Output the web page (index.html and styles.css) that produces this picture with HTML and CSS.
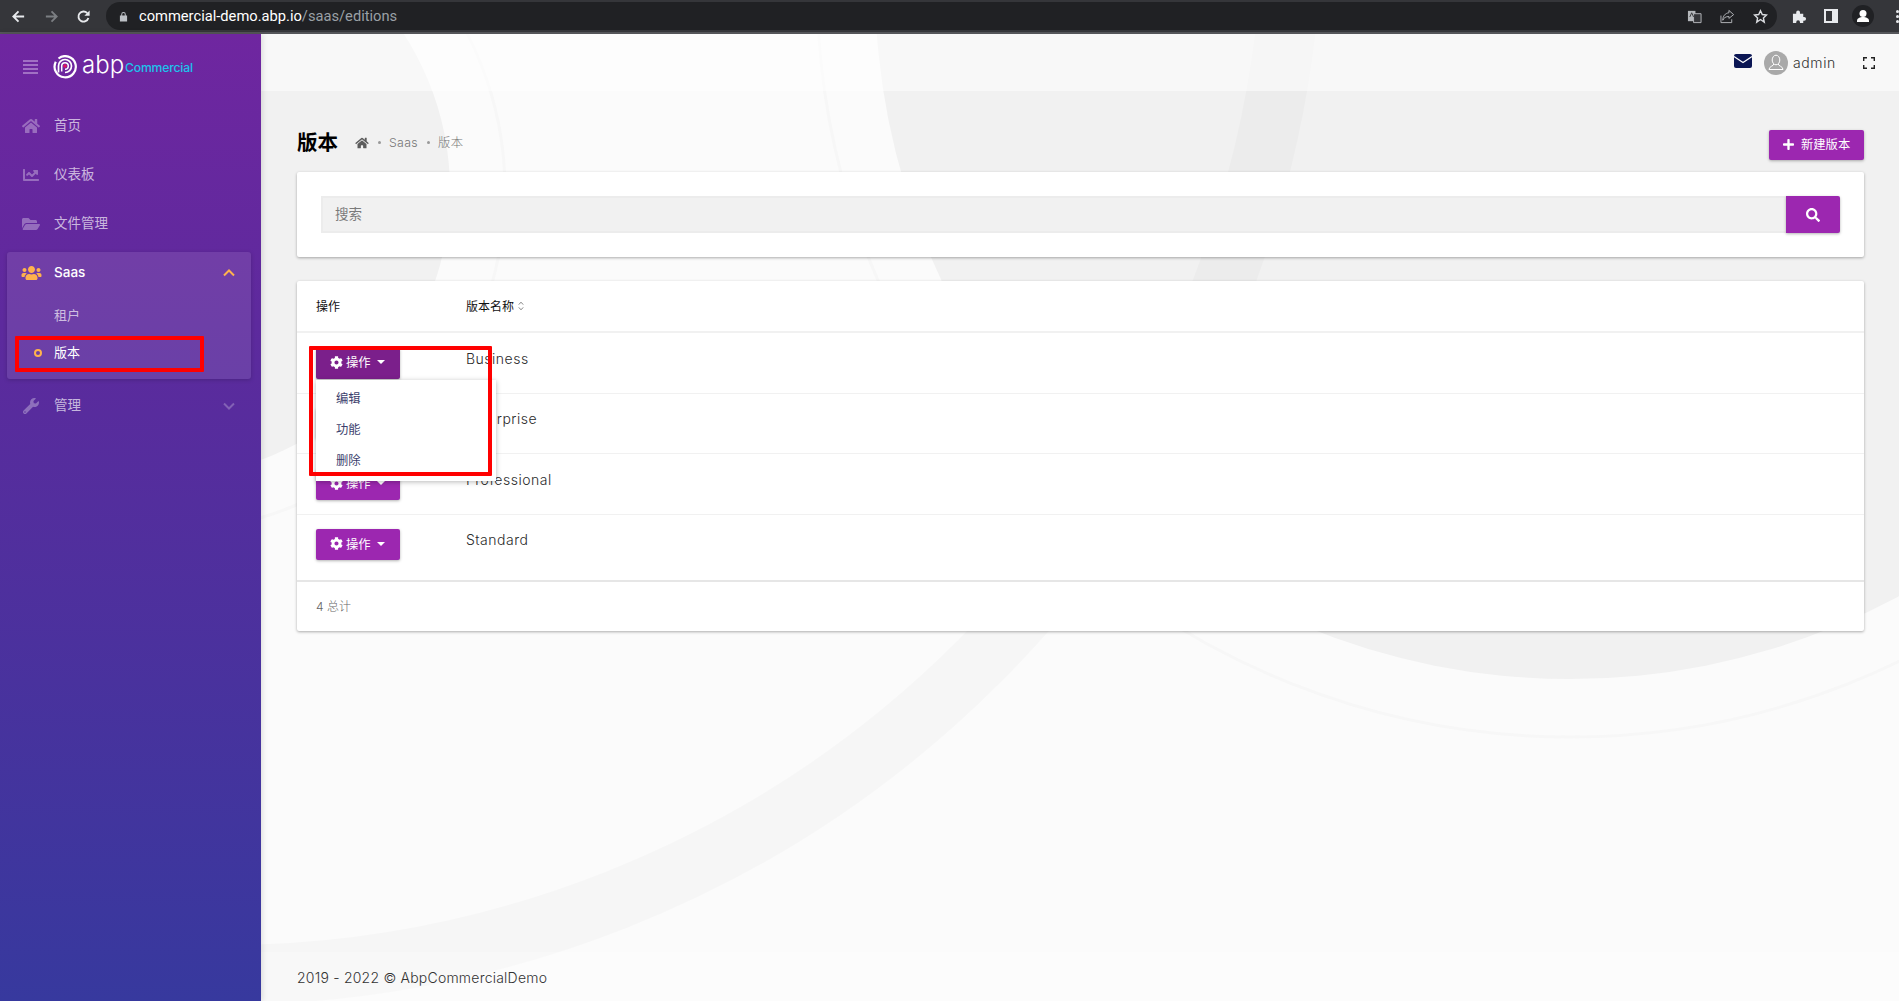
FILE: index.html
```html
<!DOCTYPE html>
<html lang="zh-CN">
<head>
<meta charset="utf-8">
<title>版本</title>
<link rel="stylesheet" href="styles.css">
</head>
<body>
<header class="chrome">
  <svg class="c-nav" viewBox="0 0 16 16"><path d="M14 8H3M8 2.500 2.500 8 8 13.500" fill="none" stroke="#e8eaed" stroke-width="2"/></svg>
  <svg class="c-nav c-fwd" viewBox="0 0 16 16"><path d="M2 8h11M8 2.500 13.500 8 8 13.500" fill="none" stroke="#7b7e82" stroke-width="2"/></svg>
  <svg class="c-nav c-rel" viewBox="0 0 16 16"><path d="M13.200 9.600A5.400 5.400 0 1 1 12 4.400" fill="none" stroke="#e8eaed" stroke-width="2"/><path d="M14.500 1.600v5.600H8.900z" fill="#e8eaed"/></svg>
  <div class="omnibox">
    <svg class="c-lock" viewBox="0 0 10 12"><path d="M2.500 5V3.500a2.500 2.500 0 0 1 5 0V5H9v6.500H1V5zM3.600 5h2.800V3.500a1.400 1.400 0 0 0-2.800 0z" fill="#bdc1c6" fill-rule="evenodd"/></svg>
    <span class="url"><span class="url-host">commercial-demo.abp.io</span><span class="url-path">/saas/editions</span></span>
    <span class="omni-icons">
      <svg class="c-ico" viewBox="0 0 16 16"><path d="M1 2h8v11H1z" fill="#b5b8bc"/><path d="M7 5h8v9.500H7z" fill="#35363a" stroke="#b5b8bc"/><path d="M3 8.500 5 4l2 4.500M9 8h4M11 7v1M9.500 12 12.500 8.500M10 9c.8 1.600 2 2.500 3 3" fill="none" stroke="#35363a" stroke-width="1"/></svg>
      <svg class="c-ico" viewBox="0 0 16 16"><path d="M1 7v7.500h11.500V11M9.500 1.500l5 4.500-5 4V8C6 8 4 9.500 3 12c0-4.500 2.500-7.500 6.500-8z" fill="none" stroke="#b5b8bc" stroke-width="1"/></svg>
      <svg class="c-ico" viewBox="0 0 16 16"><path d="m8 1.800 1.900 4.100 4.500.5-3.300 3.100.9 4.500L8 11.200l-4 2.800.9-4.500-3.300-3.100 4.500-.5z" fill="none" stroke="#dadce0" stroke-width="1.500"/></svg>
    </span>
  </div>
  <svg class="c-ext" viewBox="0 0 16 16"><path d="M1 5h3.500V3.500a2 2 0 0 1 4 0V5H12v3.500h1a2 2 0 0 1 0 4h-1V15H8.500v-1a2 2 0 0 0-4 0v1H1z" fill="#e8eaed"/></svg>
  <svg class="c-side" viewBox="0 0 14 14"><path d="M0 0h14v14H0zM2 2v10h6V2z" fill="#e8eaed" fill-rule="evenodd"/></svg>
  <span class="c-profile"><svg viewBox="0 0 22 22"><circle cx="11" cy="11" r="11" fill="#202124"/><circle cx="11" cy="8.500" r="3.500" fill="#fff"/><path d="M5 16c0-3 3-4 6-4s6 1 6 4v1H5z" fill="#fff"/></svg></span>
  <span class="c-menu"><i></i><i></i><i></i></span>
</header>

<div class="app">
  <aside class="sidebar">
    <div class="brand">
      <svg class="burger" viewBox="0 0 15 14"><path d="M0 1h15M0 5h15M0 9h15M0 13h15" stroke="#b389d0" stroke-width="1.600"/></svg>
      <svg class="logo-mark" viewBox="0 0 24 24"><path d="M5.500 3.500A10.600 10.600 0 1 1 2.800 6.800" fill="none" stroke="#fff" stroke-width="2.200"/><path d="M5.500 17.500V11a6.500 6.500 0 1 1 6.500 6.500" fill="none" stroke="#fff" stroke-width="1.700"/><path d="M8.700 16.500V11a3.300 3.300 0 1 1 3.300 3.300" fill="none" stroke="#fff" stroke-width="1.500"/><circle cx="12" cy="11" r="1.800" fill="#e6125e"/></svg>
      <span class="logo-abp">abp</span><span class="logo-com">Commercial</span>
    </div>
    <nav class="menu">
      <a class="item"><svg class="mi" viewBox="0 0 576 512"><path d="M280.37 148.26L96 300.11V464a16 16 0 0 0 16 16l112.06-.29a16 16 0 0 0 15.92-16V368a16 16 0 0 1 16-16h64a16 16 0 0 1 16 16v95.64a16 16 0 0 0 16 16.05L464 480a16 16 0 0 0 16-16V300L295.67 148.26a12.19 12.19 0 0 0-15.3 0zM571.6 251.47L488 182.56V44.05a12 12 0 0 0-12-12h-56a12 12 0 0 0-12 12v72.61L318.47 43a48 48 0 0 0-61 0L4.34 251.47a12 12 0 0 0-1.6 16.9l25.5 31A12 12 0 0 0 45.15 301l235.22-193.74a12.19 12.19 0 0 1 15.3 0L530.9 301a12 12 0 0 0 16.9-1.6l25.5-31a12 12 0 0 0-1.7-16.93z"/></svg>首页</a>
      <a class="item"><svg class="mi" viewBox="0 0 512 512"><path d="M496 384H64V80c0-8.840-7.160-16-16-16H16C7.160 64 0 71.160 0 80v336c0 17.670 14.330 32 32 32h464c8.840 0 16-7.160 16-16v-32c0-8.840-7.160-16-16-16zM464 96H345.940c-21.380 0-32.090 25.850-16.970 40.970l32.400 32.400L288 242.750l-73.370-73.370c-12.500-12.500-32.760-12.500-45.250 0l-68.690 68.690c-6.250 6.250-6.250 16.380 0 22.630l22.620 22.620c6.250 6.250 16.380 6.250 22.630 0L192 237.250l73.370 73.370c12.500 12.500 32.760 12.500 45.250 0l96-96 32.400 32.400c15.120 15.120 40.970 4.410 40.970-16.970V112c.01-8.840-7.150-16-15.990-16z"/></svg>仪表板</a>
      <a class="item"><svg class="mi" viewBox="0 0 576 512"><path d="M572.694 292.093L500.270 416.248A63.997 63.997 0 0 1 444.989 448H45.025c-18.523 0-30.064-20.093-20.731-36.093l72.424-124.155A64 64 0 0 1 152 256h399.964c18.523 0 30.064 20.093 20.730 36.093zM152 224h328v-48c0-26.510-21.490-48-48-48H272l-64-64H48C21.490 64 0 85.490 0 112v278.046l69.077-118.418C86.214 242.250 117.989 224 152 224z"/></svg>文件管理</a>
      <div class="group">
        <a class="item item-open"><svg class="mi mi-on" viewBox="0 0 640 512"><path d="M96 224c35.300 0 64-28.700 64-64s-28.700-64-64-64-64 28.700-64 64 28.700 64 64 64zm448 0c35.300 0 64-28.700 64-64s-28.700-64-64-64-64 28.700-64 64 28.700 64 64 64zm32 32h-64c-17.600 0-33.500 7.100-45.100 18.600 40.300 22.100 68.900 62 75.100 109.400h66c17.700 0 32-14.300 32-32v-32c0-35.300-28.700-64-64-64zm-256 0c61.900 0 112-50.100 112-112S381.900 32 320 32 208 82.100 208 144s50.100 112 112 112zm76.800 32h-8.300c-20.800 10-43.900 16-68.500 16s-47.600-6-68.500-16h-8.300C179.600 288 128 339.600 128 403.200V432c0 26.500 21.500 48 48 48h288c26.500 0 48-21.500 48-48v-28.800c0-63.600-51.600-115.200-115.200-115.200zm-223.700-13.400C161.500 263.100 145.600 256 128 256H64c-35.300 0-64 28.700-64 64v32c0 17.700 14.300 32 32 32h65.900c6.300-47.400 34.900-87.300 75.200-109.400z"/></svg>Saas<svg class="chev chev-on" viewBox="0 0 12 8"><path d="M1 6.500 6 1.500l5 5" fill="none" stroke-width="2"/></svg></a>
        <a class="sub">租户</a>
        <a class="sub sub-on"><i class="dot"></i>版本</a>
      </div>
      <a class="item item-last"><svg class="mi" viewBox="0 0 512 512"><path d="M507.730 109.100c-2.240-9.030-13.540-12.090-20.120-5.510l-74.360 74.360-67.880-11.310-11.310-67.880 74.360-74.360c6.620-6.620 3.430-17.900-5.660-20.160-47.380-11.740-99.550.91-136.580 37.930-39.640 39.640-50.550 97.100-34.050 147.200L18.740 402.760c-24.990 24.990-24.990 65.510 0 90.500 24.990 24.990 65.510 24.990 90.500 0l213.210-213.210c50.120 16.710 107.470 5.680 147.370-34.220 37.070-37.070 49.700-89.320 37.910-136.730zM64 472c-13.250 0-24-10.750-24-24 0-13.260 10.750-24 24-24s24 10.740 24 24c0 13.250-10.750 24-24 24z"/></svg>管理<svg class="chev" viewBox="0 0 12 8"><path d="M1 1.500 6 6.500l5-5" fill="none" stroke-width="2"/></svg></a>
    </nav>
  </aside>

  <main class="main">
    <svg class="backdrop" viewBox="261 34 1638 967" preserveAspectRatio="none">
      <circle cx="163" cy="190" r="287" fill="#f1f1f1"/>
      <circle cx="163" cy="190" r="342" fill="none" stroke="#f7f7f7" stroke-width="3"/>
      <circle cx="1570" cy="-16" r="695" fill="#f1f1f1"/>
      <circle cx="1570" cy="-16" r="753" fill="none" stroke="#f7f7f7" stroke-width="3"/>
      <circle cx="222" cy="-96" r="1071" fill="none" stroke="#000" stroke-opacity=".02" stroke-width="60"/>
    </svg>

    <div class="topbar">
      <svg class="t-mail" viewBox="0 0 18 14"><rect width="18" height="14" rx="2" fill="#0b1654"/><path d="M0 2.500 9 8.500l9-6" fill="none" stroke="#fff" stroke-width="1.200"/></svg>
      <svg class="t-avatar" viewBox="0 0 24 24"><circle cx="12" cy="12" r="12" fill="#a9a9a9"/><ellipse cx="12" cy="9" rx="3.800" ry="4.800" fill="none" stroke="#fff" stroke-width="1"/><path d="M9.800 13c0 2-4.800 2.300-4.800 5.500h14c0-3.200-4.800-3.500-4.800-5.500" fill="none" stroke="#fff" stroke-width="1"/></svg>
      <span class="t-name">admin</span>
      <svg class="t-full" viewBox="0 0 12 12"><path d="M.7 4V.7H4M8 .7h3.300V4M11.300 8v3.300H8M4 11.300H.7V8" fill="none" stroke="#222" stroke-width="1.400"/></svg>
    </div>

    <div class="content">
      <div class="page-head">
        <h1 class="title">版本</h1>
        <div class="crumbs">
          <svg class="crumb-home" viewBox="0 0 576 512"><path d="M280.37 148.26L96 300.11V464a16 16 0 0 0 16 16l112.06-.29a16 16 0 0 0 15.92-16V368a16 16 0 0 1 16-16h64a16 16 0 0 1 16 16v95.64a16 16 0 0 0 16 16.05L464 480a16 16 0 0 0 16-16V300L295.67 148.26a12.19 12.19 0 0 0-15.3 0zM571.6 251.47L488 182.56V44.05a12 12 0 0 0-12-12h-56a12 12 0 0 0-12 12v72.61L318.47 43a48 48 0 0 0-61 0L4.34 251.47a12 12 0 0 0-1.6 16.9l25.5 31A12 12 0 0 0 45.15 301l235.22-193.74a12.19 12.19 0 0 1 15.3 0L530.9 301a12 12 0 0 0 16.9-1.6l25.5-31a12 12 0 0 0-1.7-16.93z"/></svg>
          <i class="crumb-dot"></i><span>Saas</span><i class="crumb-dot"></i><span>版本</span>
        </div>
        <button class="btn btn-new"><svg class="btn-plus" viewBox="0 0 448 512"><path d="M416 208H272V64c0-17.670-14.330-32-32-32h-32c-17.670 0-32 14.330-32 32v144H32c-17.670 0-32 14.330-32 32v32c0 17.670 14.330 32 32 32h144v144c0 17.670 14.330 32 32 32h32c17.670 0 32-14.330 32-32V304h144c17.670 0 32-14.330 32-32v-32c0-17.670-14.330-32-32-32z"/></svg>新建版本</button>
      </div>

      <section class="card search-card">
        <input class="search-input" placeholder="搜索">
        <button class="btn btn-search"><svg class="search-ico" viewBox="0 0 512 512"><path d="M505 442.700L405.300 343c-4.500-4.500-10.600-7-17-7H372c27.600-35.300 44-79.700 44-128C416 93.100 322.900 0 208 0S0 93.100 0 208s93.100 208 208 208c48.300 0 92.700-16.400 128-44v16.300c0 6.400 2.500 12.500 7 17l99.700 99.700c9.400 9.400 24.600 9.400 33.900 0l28.300-28.300c9.400-9.400 9.400-24.600.1-34zM208 336c-70.700 0-128-57.200-128-128 0-70.700 57.200-128 128-128 70.700 0 128 57.200 128 128 0 70.700-57.200 128-128 128z"/></svg></button>
      </section>

      <section class="card table-card">
        <div class="row row-head">
          <div>操作</div>
          <div>版本名称<svg class="sort" viewBox="0 0 6 10"><path d="M.8 3.600 3 1.200l2.200 2.400M.8 6.400 3 8.800l2.200-2.400" fill="none" stroke="#777" stroke-width=".9"/></svg></div>
        </div>
        <div class="row row-first">
          <div class="cell-act">
            <button class="btn btn-act btn-act-open"><svg class="gear" viewBox="0 0 512 512"><use href="#cog"/></svg>操作<i class="caret"></i></button>
            <div class="dropdown">
              <a class="dd-item">编辑</a>
              <a class="dd-item">功能</a>
              <a class="dd-item">删除</a>
            </div>
          </div>
          <div class="cell-name">Business</div>
        </div>
        <div class="row">
          <div class="cell-act"><button class="btn btn-act"><svg class="gear" viewBox="0 0 512 512"><use href="#cog"/></svg>操作<i class="caret"></i></button></div>
          <div class="cell-name">Enterprise</div>
        </div>
        <div class="row">
          <div class="cell-act"><button class="btn btn-act"><svg class="gear" viewBox="0 0 512 512"><use href="#cog"/></svg>操作<i class="caret"></i></button></div>
          <div class="cell-name">Professional</div>
        </div>
        <div class="row row-end">
          <div class="cell-act"><button class="btn btn-act"><svg class="gear" viewBox="0 0 512 512"><use href="#cog"/></svg>操作<i class="caret"></i></button></div>
          <div class="cell-name">Standard</div>
        </div>
        <div class="total">4 总计</div>
      </section>
    </div>

    <footer class="foot">2019 - 2022 © AbpCommercialDemo</footer>
  </main>
</div>

<div class="mark mark-side"></div>
<div class="mark mark-drop"></div>

<svg class="defs" width="0" height="0"><defs><path id="cog" d="M487.400 315.700l-42.600-24.600c4.300-23.200 4.300-47 0-70.200l42.600-24.600c4.900-2.800 7.100-8.600 5.500-14-11.100-35.600-30-67.800-54.700-94.600-3.800-4.100-10-5.100-14.800-2.300L380.800 110c-17.900-15.400-38.500-27.300-60.800-35.100V25.800c0-5.600-3.900-10.500-9.400-11.700-36.700-8.200-74.300-7.800-109.200 0-5.500 1.200-9.400 6.100-9.400 11.700V75c-22.200 7.900-42.800 19.800-60.800 35.100L88.700 85.500c-4.900-2.800-11-1.900-14.800 2.300-24.700 26.700-43.600 58.900-54.700 94.600-1.700 5.400.6 11.200 5.500 14L67.300 221c-4.300 23.200-4.300 47 0 70.200l-42.600 24.600c-4.900 2.800-7.100 8.600-5.500 14 11.100 35.600 30 67.800 54.700 94.600 3.800 4.100 10 5.100 14.800 2.300l42.600-24.600c17.900 15.400 38.500 27.300 60.800 35.100v49.200c0 5.600 3.900 10.500 9.400 11.700 36.700 8.200 74.300 7.800 109.200 0 5.500-1.200 9.400-6.100 9.400-11.700v-49.200c22.200-7.900 42.800-19.800 60.800-35.100l42.600 24.600c4.900 2.800 11 1.900 14.800-2.300 24.700-26.700 43.600-58.900 54.700-94.600 1.500-5.500-.7-11.300-5.600-14.100zM256 336c-44.100 0-80-35.900-80-80s35.900-80 80-80 80 35.900 80 80-35.900 80-80 80z"/></defs></svg>
</body>
</html>
```
FILE: styles.css
```css
* { box-sizing: border-box; }
html, body { margin: 0; height: 100%; }
body {
  display: flex;
  flex-direction: column;
  overflow: hidden;
  font-family: Inter, "Noto Sans CJK SC", sans-serif;
  font-size: 14px;
  line-height: 21px;
  color: #333;
}

/* browser chrome */
.chrome {
  flex: 0 0 34px;
  display: flex;
  align-items: center;
  background: #35363a;
  border-bottom: 2px solid #55565a;
  padding-left: 11px;
}
.c-nav { width: 15px; height: 15px; }
.c-fwd { margin-left: 18px; }
.c-rel { margin-left: 17px; }
.omnibox {
  margin-left: 15px;
  width: 1671px;
  height: 28px;
  border-radius: 14px;
  background: #202124;
  display: flex;
  align-items: center;
  padding-left: 13px;
  padding-right: 9px;
}
.c-lock { width: 9px; height: 11px; }
.url { margin-left: 11px; font-family: Roboto, sans-serif; font-size: 14.700px; }
.url-host { color: #fff; }
.url-path { color: #9aa0a6; }
.omni-icons { margin-left: auto; display: flex; gap: 18px; align-items: center; }
.c-ico { width: 15px; height: 15px; }
.c-ext { width: 15px; height: 15px; margin-left: 15px; }
.c-side { width: 14px; height: 14px; margin-left: 17px; }
.c-profile { width: 22px; height: 22px; margin-left: 14px; display: block; }
.c-profile svg { display: block; width: 22px; height: 22px; }
.c-menu { margin-left: 22px; display: flex; flex-direction: column; gap: 2px; }
.c-menu i { display: block; width: 3px; height: 3px; border-radius: 50%; background: #e8eaed; }

.app { flex: 1; display: flex; min-height: 0; }

/* sidebar */
.sidebar {
  flex: 0 0 261px;
  background: linear-gradient(180deg, #6f26a0 0%, #5d2a9d 30%, #37399e 100%);
  box-shadow: 1px 0 6px rgba(0, 0, 0, .14);
  position: relative;
  z-index: 1;
}
.brand { height: 67px; display: flex; align-items: center; padding-left: 23px; padding-bottom: 2px; }
.burger { width: 15px; height: 14px; }
.logo-mark { width: 24px; height: 24px; margin-left: 15px; }
.logo-abp { margin-left: 5px; color: #fff; font-size: 24px; line-height: 24px; font-weight: 300; position: relative; top: -2px; letter-spacing: 0; }
.logo-com { margin-left: 1px; color: #1cc3ec; font-size: 12.200px; font-weight: 500; letter-spacing: -.2px; position: relative; top: 1px; }
.menu { padding: 0 10px 0 7px; }
.item {
  height: 49px;
  display: flex;
  align-items: center;
  padding-left: 15px;
  color: rgba(255, 255, 255, .68);
  font-size: 13.500px;
}
.mi { width: 18px; height: 16px; margin-right: 14px; fill: rgba(255, 255, 255, .32); flex: none; }
.group {
  margin-top: 4px;
  height: 127px;
  width: 244px;
  background: rgba(255, 255, 255, .1);
  border-radius: 3px;
  box-shadow: 0 1px 4px rgba(0, 0, 0, .18);
}
.item-open { height: 41px; color: #fff; font-weight: 500; }
.mi-on { width: 21px; height: 16px; margin-right: 12px; margin-left: -1px; fill: #ffb24d; }
.chev { width: 12px; height: 8px; margin-left: auto; margin-right: 16px; stroke: rgba(255, 255, 255, .25); }
.chev-on { stroke: #ffb24d; }
.sub {
  height: 37px;
  display: flex;
  align-items: center;
  padding-left: 47px;
  color: rgba(255, 255, 255, .68);
  font-size: 13px;
  position: relative;
}
.group .sub:nth-child(2) { margin-top: 4px; }
.sub-on { color: #fff; }
.dot {
  position: absolute;
  left: 27px;
  top: 15px;
  width: 8px;
  height: 8px;
  border-radius: 50%;
  border: 2px solid #ffb24d;
}
.item-last { margin-top: 2px; }

/* main */
.main { flex: 1; position: relative; display: flex; flex-direction: column; background: #fbfbfb; min-width: 0; overflow: hidden; }
.backdrop { position: absolute; inset: 0; width: 100%; height: 100%; }
.topbar {
  position: relative;
  flex: 0 0 57px;
  display: flex;
  align-items: center;
  background: rgba(255, 255, 255, .5);
  padding-left: 1473px;
  padding-top: 1px;
}
.t-mail { width: 18px; height: 14px; margin-top: -4px; }
.t-avatar { width: 24px; height: 24px; margin-left: 12px; }
.t-name { margin-left: 5px; font-weight: 300; font-size: 14px; color: #333; letter-spacing: .6px; margin-top: -1px; }
.t-full { width: 12px; height: 12px; margin-left: 27px; }

.content { position: relative; flex: 1; padding: 39px 35px 0 36px; }
.page-head { display: flex; align-items: flex-start; height: 42px; }
.title { margin: 0; font-size: 20.500px; line-height: 22px; font-weight: 700; color: #000; font-family: "Noto Sans CJK SC", sans-serif; }
.crumbs { display: flex; align-items: center; height: 21px; margin-left: 17px; margin-top: 2px; font-size: 12.300px; font-weight: 300; color: #777; gap: 8.500px; letter-spacing: .35px; }
.crumb-home { width: 14px; height: 12px; fill: #5c5c5c; }
.crumb-dot { width: 3px; height: 3px; border-radius: 50%; background: #999; }
.btn { border: 0; margin: 0; padding: 0; color: #fff; background: #9c27b0; font-family: inherit; display: flex; align-items: center; border-radius: 2px; box-shadow: 0 1px 3px rgba(0, 0, 0, .3); }
.btn-new { margin-left: auto; width: 95px; height: 30px; padding: 0 0 2px 14px; font-size: 12.300px; }
.btn-plus { width: 11px; height: 13px; fill: #fff; margin-right: 7px; }

.card { background: #fff; border-radius: 2px; box-shadow: 0 1px 3px rgba(0, 0, 0, .32); }
.search-card { height: 85px; padding: 24px; display: flex; margin-bottom: 24px; }
.search-input {
  flex: 1;
  min-width: 0;
  height: 37px;
  background: #f1f1f1;
  border: 2px solid #ececec;
  border-right: 0;
  padding: 0 12px 2px;
  font-family: inherit;
  font-size: 13.500px;
  color: #777;
  outline: 0;
}
.search-input::placeholder { color: #7a7a7a; opacity: 1; }
.btn-search { flex: 0 0 54px; height: 37px; justify-content: center; border-radius: 0 2px 2px 0; }
.search-ico { width: 14px; height: 14px; fill: #fff; }

.table-card { height: 350px; }
.row { display: grid; grid-template-columns: 169px 1fr; height: 60.500px; border-top: 1px solid #f1f1f1; }
.row > div:first-child { padding-left: 19px; }
.row-head { height: 50px; border-top: 0; align-items: center; font-size: 12px; color: #111; padding-top: 1px; }
.row-first { border-top: 2px solid #f1f1f1; height: 61.500px; }
.row-end { height: 66px; }
.cell-act { position: relative; padding-top: 14.500px; }
.cell-name { padding-top: 14.500px; font-weight: 300; color: #2b2b2b; letter-spacing: .5px; }
.sort { width: 6px; height: 10px; margin-left: 4px; }
.btn-act { width: 84px; height: 31px; padding: 0 0 2px 14px; font-size: 12.300px; }
.btn-act-open { background: #7b1f8b; position: relative; z-index: 2; }
.gear { width: 13px; height: 13px; fill: #fff; margin-right: 3px; }
.caret { width: 0; height: 0; margin-left: 6px; border-style: solid; border-width: 4px 4px 0; border-color: #fff transparent transparent; }
.dropdown {
  position: absolute;
  z-index: 2;
  left: 19px;
  top: 47px;
  width: 180px;
  height: 101px;
  padding-top: 3px;
  background: #fff;
  box-shadow: 0 1px 5px rgba(0, 0, 0, .28);
}
.dd-item { display: block; height: 31px; line-height: 31px; padding-left: 20px; font-size: 12.300px; color: #3c3f6d; }
.total { height: 51px; border-top: 2px solid #e6e6e6; padding: 14px 0 0 19px; font-size: 12px; font-weight: 300; color: #666; }

.foot { position: relative; flex: 0 0 49px; padding: 15px 0 0 36px; background: rgba(255, 255, 255, .25); font-weight: 300; font-size: 14px; letter-spacing: .22px; color: #333; }

/* red annotations drawn over the screenshot */
.mark { position: absolute; z-index: 5; border: 4px solid #f00; border-radius: 1px; }
.mark-side { left: 15px; top: 336px; width: 189px; height: 36px; }
.mark-drop { left: 309px; top: 346px; width: 183px; height: 130px; }
.defs { position: absolute; }
```
